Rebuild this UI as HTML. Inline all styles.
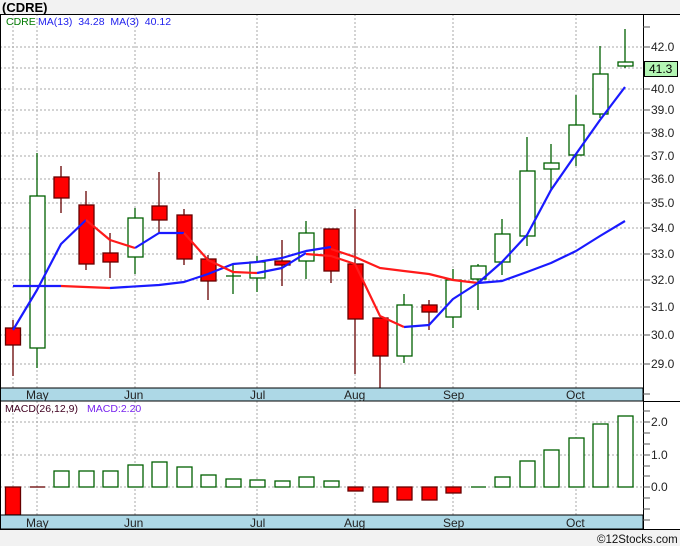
<!DOCTYPE html>
<html><head><meta charset="utf-8"><style>
html,body{margin:0;padding:0;background:#f2f2f2;}
svg{display:block;font-family:"Liberation Sans","DejaVu Sans",sans-serif;}
</style></head><body>
<svg width="680" height="546" viewBox="0 0 680 546" xmlns="http://www.w3.org/2000/svg">
<rect x="0" y="0" width="680" height="546" fill="#f2f2f2"/>
<rect x="0" y="14" width="680" height="516" fill="#fff"/>
<text x="2" y="12" font-size="13" font-weight="bold" fill="#000">(CDRE)</text>
<g stroke="#aaa" stroke-width="1" stroke-dasharray="2,2">
<line x1="13" y1="14" x2="13" y2="388"/><line x1="37" y1="14" x2="37" y2="388"/>
<line x1="135" y1="14" x2="135" y2="388"/><line x1="257" y1="14" x2="257" y2="388"/>
<line x1="355" y1="14" x2="355" y2="388"/><line x1="453" y1="14" x2="453" y2="388"/>
<line x1="576" y1="14" x2="576" y2="388"/>
<line x1="0" y1="47" x2="643" y2="47"/><line x1="0" y1="68" x2="643" y2="68"/>
<line x1="0" y1="89" x2="643" y2="89"/><line x1="0" y1="110" x2="643" y2="110"/>
<line x1="0" y1="133" x2="643" y2="133"/><line x1="0" y1="156" x2="643" y2="156"/>
<line x1="0" y1="179" x2="643" y2="179"/><line x1="0" y1="203" x2="643" y2="203"/>
<line x1="0" y1="228" x2="643" y2="228"/><line x1="0" y1="254" x2="643" y2="254"/>
<line x1="0" y1="280" x2="643" y2="280"/><line x1="0" y1="307" x2="643" y2="307"/>
<line x1="0" y1="335" x2="643" y2="335"/><line x1="0" y1="364" x2="643" y2="364"/>
<line x1="13" y1="401" x2="13" y2="515"/><line x1="37" y1="401" x2="37" y2="515"/>
<line x1="135" y1="401" x2="135" y2="515"/><line x1="257" y1="401" x2="257" y2="515"/>
<line x1="355" y1="401" x2="355" y2="515"/><line x1="453" y1="401" x2="453" y2="515"/>
<line x1="576" y1="401" x2="576" y2="515"/>
<line x1="0" y1="422" x2="643" y2="422"/><line x1="0" y1="455" x2="643" y2="455"/>
<line x1="0" y1="487" x2="643" y2="487"/>
</g>
<text x="6" y="25" font-size="10.5" fill="#007a00">CDRE</text>
<text x="38" y="25" font-size="10.5" fill="#2222ee" xml:space="preserve">MA(13)  34.28  MA(3)  40.12</text>
<g stroke-width="1.3">
<g stroke="#600" fill="#f00">
<line x1="13" y1="320" x2="13" y2="376"/><rect x="5.5" y="328" width="15" height="17"/>
<line x1="61" y1="166" x2="61" y2="213"/><rect x="54" y="177" width="15" height="21"/>
<line x1="86" y1="191" x2="86" y2="270"/><rect x="79" y="205" width="15" height="59"/>
<line x1="110" y1="233" x2="110" y2="278"/><rect x="103" y="253" width="15" height="9"/>
<line x1="159" y1="172" x2="159" y2="233"/><rect x="152" y="206" width="15" height="14"/>
<line x1="184" y1="209" x2="184" y2="265"/><rect x="177" y="215" width="15" height="44"/>
<line x1="208" y1="255" x2="208" y2="300"/><rect x="201" y="259" width="15" height="22"/>
<line x1="282" y1="240" x2="282" y2="286"/><rect x="275" y="261" width="15" height="4"/>
<line x1="331" y1="229" x2="331" y2="283"/><rect x="324" y="229" width="15" height="42"/>
<line x1="355" y1="209" x2="355" y2="374"/><rect x="348" y="264" width="15" height="55"/>
<line x1="380" y1="318" x2="380" y2="388"/><rect x="373" y="318" width="15" height="38"/>
<line x1="429" y1="300" x2="429" y2="330"/><rect x="422" y="305" width="15" height="7"/>
</g>
<g stroke="#006000" fill="#fff">
<line x1="37" y1="153" x2="37" y2="368"/><rect x="30" y="196" width="15" height="152"/>
<line x1="135" y1="208" x2="135" y2="274"/><rect x="128" y="218" width="15" height="39"/>
<line x1="233" y1="264" x2="233" y2="294"/><line x1="226" y1="276" x2="241" y2="276"/>
<line x1="257" y1="256" x2="257" y2="292"/><rect x="250" y="262" width="15" height="16"/>
<line x1="306" y1="221" x2="306" y2="279"/><rect x="299" y="233" width="15" height="28"/>
<line x1="404" y1="294" x2="404" y2="363"/><rect x="397" y="305" width="15" height="51"/>
<line x1="453" y1="269" x2="453" y2="328"/><rect x="446" y="280" width="15" height="37"/>
<line x1="478" y1="264" x2="478" y2="310"/><rect x="471" y="266" width="15" height="13"/>
<line x1="502" y1="219" x2="502" y2="275"/><rect x="495" y="234" width="15" height="28"/>
<line x1="527" y1="137" x2="527" y2="246"/><rect x="520" y="171" width="15" height="65"/>
<line x1="551" y1="144" x2="551" y2="190"/><rect x="544" y="163" width="15" height="6"/>
<line x1="576" y1="95" x2="576" y2="166"/><rect x="569" y="125" width="15" height="30"/>
<line x1="600" y1="46" x2="600" y2="118"/><rect x="593" y="74" width="15" height="40"/>
<line x1="625" y1="29" x2="625" y2="68"/><rect x="618" y="62" width="15" height="4"/>
</g>
</g>
<g fill="none" stroke-width="2.2" stroke-linejoin="round">
<polyline stroke="#1a1aff" points="13,286 61,286"/>
<polyline stroke="#ff1a1a" points="61,286 110,288"/>
<polyline stroke="#1a1aff" points="110,288 159,285 184,282 208,274 233,264 257,262 282,258 306,251 331,247"/>
<polyline stroke="#ff1a1a" points="331,249 355,257 380,268 404,271 429,274 453,280 478,283"/>
<polyline stroke="#1a1aff" points="478,283 502,281 527,272 551,263 576,251 600,236 625,221"/>
<polyline stroke="#1a1aff" points="13,330 37,290 61,244 86,220"/>
<polyline stroke="#ff1a1a" points="86,220 110,240 135,248"/>
<polyline stroke="#1a1aff" points="135,248 159,233 184,233"/>
<polyline stroke="#ff1a1a" points="184,233 208,260 233,272 257,273"/>
<polyline stroke="#1a1aff" points="257,273 282,268 306,253"/>
<polyline stroke="#ff1a1a" points="306,254 331,256 355,264 380,316 404,327"/>
<polyline stroke="#1a1aff" points="404,327 429,325 453,299 478,283 502,262 527,235 551,190 576,154 600,120 625,87"/>
</g>
<g stroke-width="1.3">
<rect x="5.5" y="487" width="15" height="28" fill="#f00" stroke="#600"/>
<line x1="30" y1="487" x2="45" y2="487" stroke="#600"/>
<g fill="#fff" stroke="#006000">
<rect x="54" y="471" width="15" height="16"/><rect x="79" y="471" width="15" height="16"/>
<rect x="103" y="471" width="15" height="16"/><rect x="128" y="465" width="15" height="22"/>
<rect x="152" y="462" width="15" height="25"/><rect x="177" y="467" width="15" height="20"/>
<rect x="201" y="475" width="15" height="12"/><rect x="226" y="479" width="15" height="8"/>
<rect x="250" y="480" width="15" height="7"/><rect x="275" y="481" width="15" height="6"/>
<rect x="299" y="477" width="15" height="10"/><rect x="324" y="481" width="15" height="6"/>
<line x1="471" y1="487" x2="486" y2="487"/>
<rect x="495" y="477" width="15" height="10"/><rect x="520" y="461" width="15" height="26"/>
<rect x="544" y="450" width="15" height="37"/><rect x="569" y="438" width="15" height="49"/>
<rect x="593" y="424" width="15" height="63"/><rect x="618" y="416" width="15" height="71"/>
</g>
<g fill="#f00" stroke="#600">
<rect x="348" y="487" width="15" height="4"/><rect x="373" y="487" width="15" height="15"/>
<rect x="397" y="487" width="15" height="13"/><rect x="422" y="487" width="15" height="13"/>
<rect x="446" y="487" width="15" height="6"/>
</g>
</g>
<text x="5" y="412" font-size="10.5" fill="#400020">MACD(26,12,9)</text>
<text x="87" y="412" font-size="10.5" fill="#7722ee">MACD:2.20</text>
<rect x="0" y="388" width="643" height="13" fill="#add8e6" stroke="#000" stroke-width="1"/>
<rect x="0" y="515" width="643" height="14" fill="#add8e6" stroke="#000" stroke-width="1"/>
<g font-size="12" fill="#222">
<text x="26" y="399">May</text><text x="124" y="399">Jun</text><text x="250" y="399">Jul</text>
<text x="344" y="399">Aug</text><text x="443" y="399">Sep</text><text x="566" y="399">Oct</text>
<text x="26" y="527">May</text><text x="124" y="527">Jun</text><text x="250" y="527">Jul</text>
<text x="344" y="527">Aug</text><text x="443" y="527">Sep</text><text x="566" y="527">Oct</text>
</g>
<line x1="0" y1="14.5" x2="680" y2="14.5" stroke="#000"/>
<line x1="0.5" y1="14" x2="0.5" y2="530" stroke="#000"/>
<line x1="643.5" y1="14" x2="643.5" y2="530" stroke="#000"/>
<line x1="0" y1="529.5" x2="680" y2="529.5" stroke="#000"/>
<line x1="643" y1="401.5" x2="680" y2="401.5" stroke="#000"/>
<g stroke="#555">
<line x1="643" y1="27" x2="650" y2="27"/><line x1="643" y1="47" x2="650" y2="47"/>
<line x1="643" y1="89" x2="650" y2="89"/><line x1="643" y1="110" x2="650" y2="110"/>
<line x1="643" y1="133" x2="650" y2="133"/><line x1="643" y1="156" x2="650" y2="156"/>
<line x1="643" y1="179" x2="650" y2="179"/><line x1="643" y1="203" x2="650" y2="203"/>
<line x1="643" y1="228" x2="650" y2="228"/><line x1="643" y1="254" x2="650" y2="254"/>
<line x1="643" y1="280" x2="650" y2="280"/><line x1="643" y1="307" x2="650" y2="307"/>
<line x1="643" y1="335" x2="650" y2="335"/><line x1="643" y1="364" x2="650" y2="364"/>
<line x1="643" y1="394" x2="650" y2="394"/>
<line x1="643" y1="411" x2="650" y2="411"/><line x1="643" y1="422" x2="650" y2="422"/>
<line x1="643" y1="433" x2="650" y2="433"/><line x1="643" y1="444" x2="650" y2="444"/>
<line x1="643" y1="455" x2="650" y2="455"/><line x1="643" y1="466" x2="650" y2="466"/>
<line x1="643" y1="476" x2="650" y2="476"/><line x1="643" y1="487" x2="650" y2="487"/>
<line x1="643" y1="498" x2="650" y2="498"/><line x1="643" y1="509" x2="650" y2="509"/>
<line x1="643" y1="520" x2="650" y2="520"/>
</g>
<g font-size="12" fill="#222">
<text x="651" y="51">42.0</text><text x="651" y="93">40.0</text><text x="651" y="114">39.0</text>
<text x="651" y="137">38.0</text><text x="651" y="160">37.0</text><text x="651" y="183">36.0</text>
<text x="651" y="207">35.0</text><text x="651" y="232">34.0</text><text x="651" y="258">33.0</text>
<text x="651" y="284">32.0</text><text x="651" y="311">31.0</text><text x="651" y="339">30.0</text>
<text x="651" y="368">29.0</text>
<text x="651" y="426">2.0</text><text x="651" y="459">1.0</text><text x="651" y="491">0.0</text>
</g>
<rect x="644.5" y="61.5" width="33" height="15" fill="#b3f5b3" stroke="#000"/>
<text x="649" y="73" font-size="12" fill="#000">41.3</text>
<text x="597" y="543" font-size="11.5" fill="#111">©12Stocks.com</text>
</svg>
</body></html>
